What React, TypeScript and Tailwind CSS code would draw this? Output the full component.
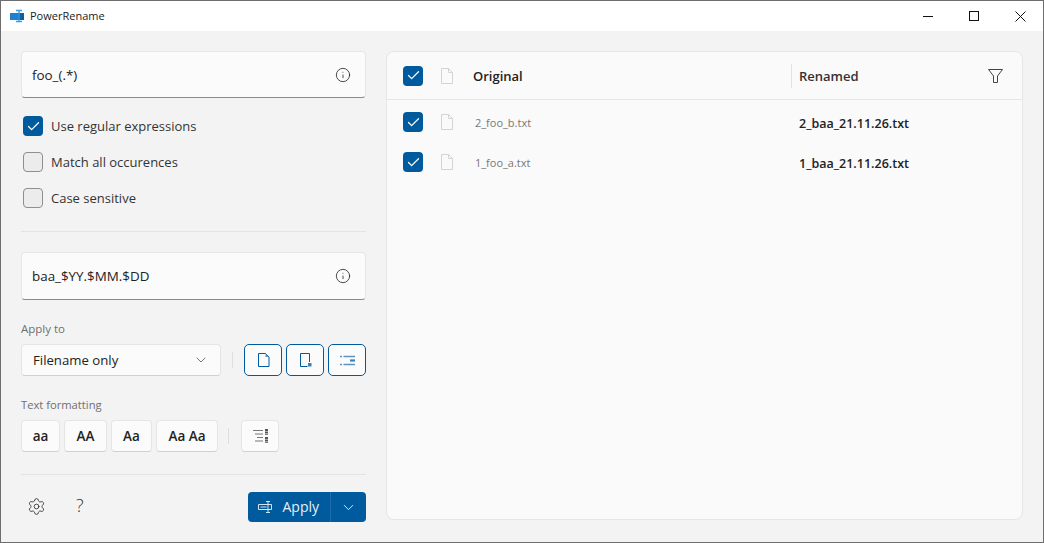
import { Check, ChevronDown, Info, Settings } from "lucide-react";

function CheckBox({ checked }: { checked?: boolean }) {
  return checked ? (
    <div className="flex h-5 w-5 shrink-0 items-center justify-center rounded-[4px] bg-[#005a9e]">
      <Check size={15} strokeWidth={2} className="text-white" />
    </div>
  ) : (
    <div className="h-5 w-5 shrink-0 rounded-[4px] border border-[#8f8f8f] bg-[#ececec]" />
  );
}

function FileIcon({ className }: { className?: string }) {
  return (
    <svg width="12" height="16" viewBox="0 0 12 16" fill="none" className={className}>
      <path d="M.5.5h7l4 4v11H.5z M7.5.5v4h4" stroke="currentColor" strokeWidth="1" />
    </svg>
  );
}

function RowCheck({ text, checked }: { text: string; checked?: boolean }) {
  return (
    <div className="flex h-9 items-center gap-2 pl-[2px]">
      <CheckBox checked={checked} />
      <span className="pt-[2px] text-[13px] text-[#333]">{text}</span>
    </div>
  );
}

function TextBox({ value, height }: { value: string; height: string }) {
  return (
    <div className={`flex ${height} items-center justify-between rounded-[4px] border border-[#e6e6e6] border-b-[#8a8a8a] bg-[#fbfbfb] pl-[10px] pr-[14px]`}>
      <span className="pt-px text-[13.4px] text-[#222]">{value}</span>
      <Info size={16} strokeWidth={1.2} className="text-[#222]" />
    </div>
  );
}

function FmtButton({ label, width }: { label: string; width: string }) {
  return (
    <div className={`flex h-8 ${width} items-center justify-center rounded-[4px] border border-[#e5e5e5] border-b-[#d0d0d0] bg-[#fbfbfb] text-[13.5px] font-semibold text-[#222]`}>
      {label}
    </div>
  );
}

function ToggleButton({ children }: { children: React.ReactNode }) {
  return (
    <div className="flex h-8 w-[38px] items-center justify-center rounded-[5px] border border-[#005a9e] bg-[#fbfbfb]">
      {children}
    </div>
  );
}

function FileRow({ original, renamed }: { original: string; renamed: string }) {
  return (
    <div className="flex h-10 items-center pl-4 pt-[4px]">
      <CheckBox checked />
      <FileIcon className="ml-[18px] text-[#d4d4d4]" />
      <span className="ml-[22px] w-[324px] pt-[2px] text-[11px] text-[#777]">{original}</span>
      <span className="pt-1 text-[12.5px] font-semibold text-[#222]">{renamed}</span>
    </div>
  );
}

export default function App() {
  return (
    <div className="flex h-[543px] w-[1044px] flex-col overflow-hidden border border-[#6e6e6e] bg-[#f3f3f3] font-['Open_Sans',sans-serif]">
      {/* title bar */}
      <div className="flex h-[30px] shrink-0 items-center justify-between bg-white">
        <div className="flex items-center gap-[6px] pl-[9px]">
          <svg width="14" height="14" viewBox="0 0 14 14">
            <rect x="0" y="4" width="9" height="7" fill="#1e7fd0" />
            <rect x="8" y="4" width="6" height="7" fill="#0f5ea8" />
            <path d="M6 1.500h6M9 1.500v11M6 12.500h6" stroke="#35a0e6" strokeWidth="1.400" fill="none" />
          </svg>
          <span className="text-[11px] text-[#1b1b1b]">PowerRename</span>
        </div>
        <div className="flex items-center">
          <div className="flex h-[30px] w-[46px] items-center justify-center">
            <div className="h-px w-[10px] bg-[#111]" />
          </div>
          <div className="flex h-[30px] w-[46px] items-center justify-center">
            <div className="h-[10px] w-[10px] border border-[#111]" />
          </div>
          <div className="flex h-[30px] w-[46px] items-center justify-center">
            <svg width="11" height="11" viewBox="0 0 11 11">
              <path d="M.5.5l10 10M10.500.5l-10 10" stroke="#111" strokeWidth="1" />
            </svg>
          </div>
        </div>
      </div>

      <div className="flex gap-5 pl-5 pt-5">
        {/* left panel */}
        <div className="flex w-[345px] flex-col">
          <TextBox value="foo_(.*)" height="h-[47px]" />
          <div className="mt-[10px]">
            <RowCheck text="Use regular expressions" checked />
            <RowCheck text="Match all occurences" />
            <RowCheck text="Case sensitive" />
          </div>
          <div className="mt-[15px] h-px bg-[#e3e3e3]" />
          <div className="mt-5">
            <TextBox value="baa_$YY.$MM.$DD" height="h-[48px]" />
          </div>

          <div className="mt-[21px] text-[11.500px] leading-4 text-[#707070]">Apply to</div>
          <div className="mt-[7px] flex items-center">
            <div className="flex h-8 w-[200px] items-center justify-between rounded-[4px] border border-[#e5e5e5] border-b-[#d0d0d0] bg-[#fbfbfb] pl-[11px] pr-[11px]">
              <span className="pt-[2px] text-[13.200px] text-[#222]">Filename only</span>
              <ChevronDown size={16} strokeWidth={1.100} className="text-[#444]" />
            </div>
            <div className="ml-[11px] h-[16px] w-px bg-[#dedede]" />
            <div className="ml-[11px] flex gap-1">
              <ToggleButton>
                <svg width="13" height="14" viewBox="0 0 13 14" fill="none">
                  <path d="M1.500.5h7l3.500 3.500v9.500h-10.500z" stroke="#005a9e" />
                  <path d="M8.500.5v3.500h3.500z" fill="#5b93c4" />
                </svg>
              </ToggleButton>
              <ToggleButton>
                <svg width="13" height="14" viewBox="0 0 13 14" fill="none">
                  <path d="M10.500 9V.5h-9v13h7" stroke="#005a9e" />
                  <rect x="9" y="10" width="3.500" height="3.500" fill="#3f7fb6" />
                </svg>
              </ToggleButton>
              <ToggleButton>
                <svg width="15" height="11" viewBox="0 0 15 11">
                  <path d="M0 1.500h2M3.500 1.500h11.500M0 9.500h2M3.500 9.500h11.500" stroke="#5b93c4" strokeWidth="1.400" />
                  <path d="M10 5.500h5" stroke="#3f7fb6" strokeWidth="2.200" />
                </svg>
              </ToggleButton>
            </div>
          </div>

          <div className="mt-[21px] text-[11.200px] leading-4 text-[#707070]">Text formatting</div>
          <div className="mt-[7px] flex items-center">
            <div className="flex gap-1">
              <FmtButton label="aa" width="w-[39px]" />
              <FmtButton label="AA" width="w-[43px]" />
              <FmtButton label="Aa" width="w-[41px]" />
              <FmtButton label="Aa Aa" width="w-[62px]" />
            </div>
            <div className="ml-[10px] h-[16px] w-px bg-[#dedede]" />
            <div className="ml-[12px] flex h-8 w-[38px] items-center justify-center rounded-[4px] border border-[#e5e5e5] border-b-[#d0d0d0] bg-[#fbfbfb]">
              <svg width="15" height="14" viewBox="0 0 15 14">
                <path d="M0 1.500h10M2 5h8M4 8.500h6M2 12h8" stroke="#777" strokeWidth="1.100" />
                <path d="M13.500 0v6M13.500 8v6" stroke="#555" strokeWidth="3" strokeDasharray="2 .6" />
              </svg>
            </div>
          </div>

          <div className="mt-[22px] h-px bg-[#e3e3e3]" />
          <div className="mt-[17px] flex items-center justify-between">
            <div className="flex items-center pb-[2px] pl-[6px]">
              <Settings size={19} strokeWidth={1.100} className="text-[#333]" />
              <span className="ml-[30px] mb-[2px] text-[18px] font-light leading-none text-[#333]">?</span>
            </div>
            <div className="flex h-[30px] w-[118px] items-center rounded-[4px] bg-[#005a9e] text-white">
              <div className="flex h-full w-[82px] items-center justify-end gap-[9px] pb-px pr-[11px]">
                <svg width="15" height="12" viewBox="0 0 15 12" fill="none">
                  <path d="M.5 3.500h13v5H.5z" stroke="#d5e4f1" />
                  <path d="M2.500 6h6" stroke="#d5e4f1" />
                  <path d="M8 .5h4M10 .5v11M8 11.500h4" stroke="#d5e4f1" />
                </svg>
                <span className="text-[14px] text-[#e6eff7]">Apply</span>
              </div>
              <div className="h-full w-px bg-[#1f6dab]" />
              <div className="flex flex-1 items-center justify-center">
                <ChevronDown size={17} strokeWidth={1.200} />
              </div>
            </div>
          </div>
        </div>

        {/* file list */}
        <div className="h-[469px] w-[637px] rounded-[8px] border border-[#e6e6e6] bg-[#fafafa]">
          <div className="flex h-[48px] items-center border-b border-[#e5e5e5] pl-4">
            <CheckBox checked />
            <FileIcon className="ml-[18px] text-[#d4d4d4]" />
            <span className="ml-[20px] w-[318px] pt-[2px] text-[13px] font-semibold text-[#222]">Original</span>
            <div className="h-[24px] w-px bg-[#e3e3e3]" />
            <span className="ml-[7px] w-[189px] pt-[2px] text-[13px] font-semibold text-[#333]">Renamed</span>
            <svg width="15" height="14" viewBox="0 0 15 14" fill="none">
              <path d="M.5.5h14L9.500 7v6.500h-4V7z" stroke="#444" />
            </svg>
          </div>
          <FileRow original="2_foo_b.txt" renamed="2_baa_21.11.26.txt" />
          <FileRow original="1_foo_a.txt" renamed="1_baa_21.11.26.txt" />
        </div>
      </div>
    </div>
  );
}
